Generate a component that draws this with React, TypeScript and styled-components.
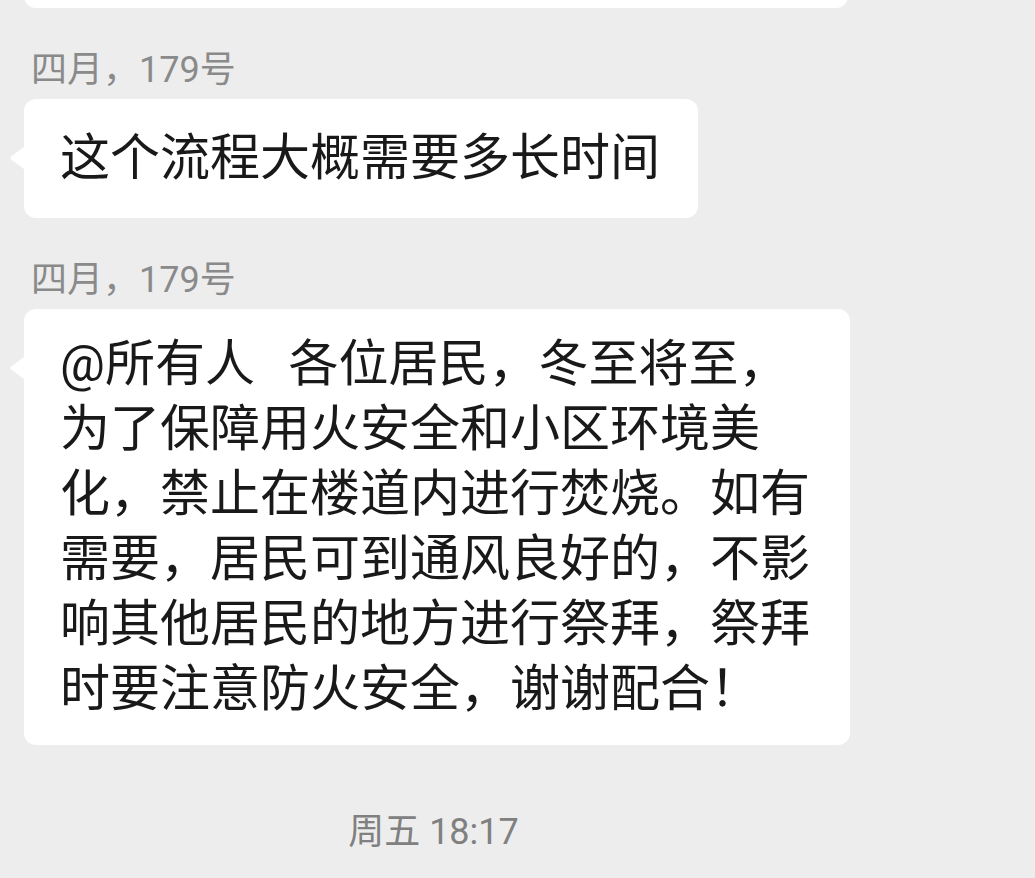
import React from 'react';
import styled, { createGlobalStyle } from 'styled-components';

const GlobalStyle = createGlobalStyle`
  html, body {
    margin: 0;
    padding: 0;
    background: #ededed;
    overflow: hidden;
  }
  body {
    font-family: Roboto, "Noto Sans CJK SC", sans-serif;
  }
`;

type Msg = { name: string; text: string };

const messages: Msg[] = [
  { name: '四月，179号', text: '这个流程大概需要多长时间' },
  {
    name: '四月，179号',
    text: '@所有人\u2005\u2006 各位居民，冬至将至，为了保障用火安全和小区环境美化，禁止在楼道内进行焚烧。如有需要，居民可到通风良好的，不影响其他居民的地方进行祭拜，祭拜时要注意防火安全，谢谢配合！',
  },
];

export default function App() {
  return (
    <>
      <GlobalStyle />
      <ChatList>
        <Group>
          <CutBubble />
        </Group>
        {messages.map((m, i) => (
          <Group key={i} $spaced>
            <Name>{m.name}</Name>
            <Bubble>
              <Tail viewBox="0 0 15 22" width={15} height={22}>
                <path d="M15 0 L2.2 9.6 Q0.4 11 2.2 12.4 L15 22 Z" fill="#fff" />
              </Tail>
              <Text>{m.text}</Text>
            </Bubble>
          </Group>
        ))}
        <Time>周五 18:17</Time>
      </ChatList>
    </>
  );
}

const ChatList = styled.div`
  width: 867px;
  display: flex;
  flex-direction: column;
`;

const Group = styled.div<{ $spaced?: boolean }>`
  padding-left: 24px;
  display: flex;
  flex-direction: column;
  align-items: flex-start;
  margin-top: ${(p) => (p.$spaced ? '40px' : '0')};
`;

const CutBubble = styled.div`
  width: 824px;
  height: 60px;
  margin-top: -52px;
  background: #fff;
  border-radius: 12px;
`;

const Name = styled.div`
  font-size: 36px;
  line-height: 44px;
  color: #8a8a8a;
  padding-left: 7px;
  margin-bottom: 7px;
`;

const Bubble = styled.div`
  position: relative;
  box-sizing: border-box;
  max-width: 826px;
  min-height: 119px;
  padding: 23px 38px 23px 36px;
  background: #fff;
  border-radius: 12px;
  display: flex;
  align-items: center;
`;

const Tail = styled.svg`
  position: absolute;
  left: -15px;
  top: 48px;
  display: block;
`;

const Text = styled.div`
  font-size: 50px;
  line-height: 65px;
  color: #191919;
  word-break: normal;
  line-break: normal;
`;

const Time = styled.div`
  margin-top: 65px;
  font-size: 36px;
  line-height: 44px;
  color: #808080;
  text-align: center;
`;
